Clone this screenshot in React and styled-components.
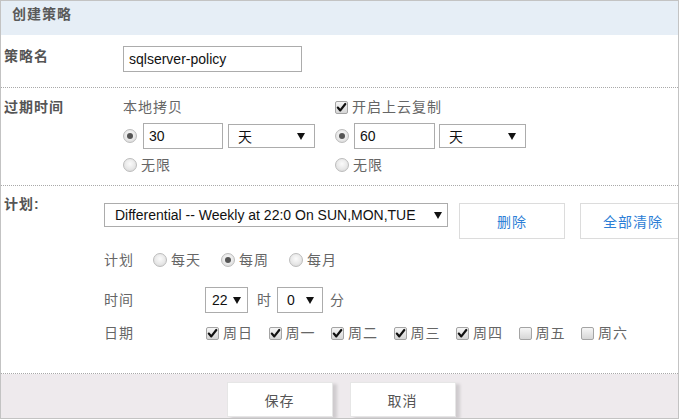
import React from 'react';
import styled, { createGlobalStyle } from 'styled-components';

const Global = createGlobalStyle`
  html, body { margin: 0; padding: 0; background: #fff; }
  body {
    font-family: "Liberation Sans", Arial, "Noto Sans CJK SC", sans-serif;
    font-size: 14px;
    color: #666;
  }
  * { box-sizing: border-box; }
`;

const Panel = styled.div`
  width: 679px;
  height: 419px;
  border: 1px solid #c3c3c3;
  overflow: hidden;
  display: flex;
  flex-direction: column;
  background: #fff;
`;

const Header = styled.div`
  height: 34px;
  flex-shrink: 0;
  background: #e6eef6;
  padding: 5px 0 0 11px;
  font-weight: bold;
  color: #5a5a5a;
  letter-spacing: 1px;
  line-height: 16px;
`;

const Section = styled.div`
  display: flex;
  height: ${p => p.$h}px;
  flex-shrink: 0;
  border-bottom: 1px dotted #a9a9a9;
`;

const FieldLabel = styled.div`
  width: ${p => p.$w}px;
  flex-shrink: 0;
  padding: ${p => p.$top}px 0 0 3px;
  font-weight: bold;
  color: #555;
  letter-spacing: 1px;
  line-height: 16px;
`;

const Column = styled.div`
  display: flex;
  flex-direction: column;
  width: ${p => (p.$w ? `${p.$w}px` : 'auto')};
  flex-shrink: 0;
  padding-top: ${p => p.$top || 0}px;
`;

const Line = styled.div`
  display: flex;
  align-items: ${p => (p.$top ? 'flex-start' : 'center')};
  height: ${p => p.$h || 16}px;
  margin-top: ${p => p.$mt || 0}px;
  gap: ${p => p.$gap || 0}px;
`;

const Text = styled.span`
  letter-spacing: 1px;
  color: #666;
  line-height: 16px;
  white-space: nowrap;
  margin-left: ${p => p.$ml || 0}px;
  width: ${p => (p.$w ? `${p.$w}px` : 'auto')};
  flex-shrink: 0;
`;

const TextInput = styled.div`
  width: ${p => p.$w}px;
  height: ${p => p.$h || 26}px;
  margin-left: ${p => p.$ml || 0}px;
  border: 1px solid #acacac;
  display: flex;
  align-items: center;
  padding-left: 5px;
  color: #111;
  background: #fff;
  flex-shrink: 0;
`;

const SelectBox = styled.div`
  width: ${p => p.$w}px;
  height: ${p => p.$h || 24}px;
  margin-left: ${p => p.$ml || 0}px;
  border: 1px solid #acacac;
  display: flex;
  align-items: center;
  justify-content: space-between;
  padding: 0 ${p => p.$pr || 9}px 0 ${p => p.$pl || 9}px;
  color: #111;
  background: #fff;
  flex-shrink: 0;
  white-space: nowrap;
`;

const Arrow = styled.span`
  width: 0;
  height: 0;
  border-left: 4px solid transparent;
  border-right: 4px solid transparent;
  border-top: 7px solid #111;
  flex-shrink: 0;
`;

const RadioDot = styled.span`
  width: 14px;
  height: 14px;
  border-radius: 50%;
  flex-shrink: 0;
  border: 1px solid #bcbcbc;
  background: radial-gradient(circle at 50% 40%, #fbfbfb 0%, #e8e8e8 55%, #d2d2d2 100%);
  display: inline-flex;
  align-items: center;
  justify-content: center;
  &::after {
    content: '';
    width: 6px;
    height: 6px;
    border-radius: 50%;
    background: ${p => (p.$on ? '#555' : 'transparent')};
  }
`;

const CheckBox = styled.span`
  width: 13px;
  height: 13px;
  border-radius: 2px;
  flex-shrink: 0;
  border: 1px solid #a4a4a4;
  background: linear-gradient(#f6f6f6, #d6d6d6);
  display: inline-flex;
  align-items: center;
  justify-content: center;
`;

const Check = ({ on }) => (
  <CheckBox>
    {on && (
      <svg width="11" height="11" viewBox="0 0 11 11">
        <path d="M1.8 5.6 L4.3 8.4 L9.3 2" fill="none" stroke="#111" strokeWidth="2.2" strokeLinecap="round" strokeLinejoin="round" />
      </svg>
    )}
  </CheckBox>
);

const Choice = styled.label`
  display: flex;
  align-items: center;
  flex-shrink: 0;
  margin-left: ${p => p.$ml || 0}px;
`;

const ActionButton = styled.div`
  width: 106px;
  height: 36px;
  margin-left: ${p => p.$ml || 0}px;
  border: 1px solid #dcdcdc;
  background: #fff;
  color: #2c7ed6;
  letter-spacing: 1px;
  display: flex;
  align-items: center;
  justify-content: center;
  flex-shrink: 0;
`;

const Footer = styled.div`
  flex: 1;
  background: #eeeaed;
  display: flex;
  justify-content: center;
  padding: 8px 0 0 3px;
  gap: 17px;
`;

const FooterButton = styled.div`
  width: 106px;
  height: 35px;
  background: #fff;
  border: 1px solid #e6e6e6;
  box-shadow: 4px 2px 3px rgba(0, 0, 0, 0.13);
  color: #555;
  letter-spacing: 1px;
  display: flex;
  align-items: center;
  justify-content: center;
`;

const days = [
  ['周日', true], ['周一', true], ['周二', true], ['周三', true],
  ['周四', true], ['周五', false], ['周六', false],
];

export default function App() {
  return (
    <>
      <Global />
      <Panel>
        <Header>创建策略</Header>

        <Section $h={53}>
          <FieldLabel $w={122} $top={13}>策略名</FieldLabel>
          <Column $top={11}>
            <TextInput $w={179}>sqlserver-policy</TextInput>
          </Column>
        </Section>

        <Section $h={98}>
          <FieldLabel $w={122} $top={11}>过期时间</FieldLabel>
          <Column $w={212} $top={11}>
            <Line><Text>本地拷贝</Text></Line>
            <Line $h={26} $mt={8}>
              <RadioDot $on />
              <TextInput $w={80} $ml={6}>30</TextInput>
              <SelectBox $w={87} $ml={5}>
                <span>天</span>
                <Arrow />
              </SelectBox>
            </Line>
            <Line $mt={8}>
              <RadioDot />
              <Text $ml={4}>无限</Text>
            </Line>
          </Column>
          <Column $top={11}>
            <Line>
              <Check on />
              <Text $ml={4}>开启上云复制</Text>
            </Line>
            <Line $h={26} $mt={8}>
              <RadioDot $on />
              <TextInput $w={81} $ml={5}>60</TextInput>
              <SelectBox $w={87} $ml={4}>
                <span>天</span>
                <Arrow />
              </SelectBox>
            </Line>
            <Line $mt={8}>
              <RadioDot />
              <Text $ml={4}>无限</Text>
            </Line>
          </Column>
        </Section>

        <Section $h={188}>
          <FieldLabel $w={103} $top={10}>计划:</FieldLabel>
          <Column $top={17}>
            <Line $h={36} $top>
              <SelectBox $w={344} $pl={10} $pr={5}>
                <span>Differential -- Weekly at 22:0 On SUN,MON,TUE</span>
                <Arrow />
              </SelectBox>
              <ActionButton $ml={11}>删除</ActionButton>
              <ActionButton $ml={15}>全部清除</ActionButton>
            </Line>
            <Line $h={20} $mt={11} $gap={20}>
              <Text $w={29}>计划</Text>
              <Choice><RadioDot /><Text $ml={4}>每天</Text></Choice>
              <Choice><RadioDot $on /><Text $ml={4}>每周</Text></Choice>
              <Choice><RadioDot /><Text $ml={4}>每月</Text></Choice>
            </Line>
            <Line $h={26} $mt={17}>
              <Text $w={101}>时间</Text>
              <SelectBox $w={43} $h={26} $pl={6} $pr={6}>
                <span>22</span>
                <Arrow />
              </SelectBox>
              <Text $ml={9}>时</Text>
              <SelectBox $w={46} $h={26} $ml={5} $pl={9} $pr={8}>
                <span>0</span>
                <Arrow />
              </SelectBox>
              <Text $ml={7}>分</Text>
            </Line>
            <Line $h={20} $mt={10}>
              <Text $w={102}>日期</Text>
              {days.map(([d, on], i) => (
                <Choice key={d} $ml={i === 0 ? 0 : 15.5}>
                  <Check on={on} />
                  <Text $ml={4}>{d}</Text>
                </Choice>
              ))}
            </Line>
          </Column>
        </Section>

        <Footer>
          <FooterButton>保存</FooterButton>
          <FooterButton>取消</FooterButton>
        </Footer>
      </Panel>
    </>
  );
}
